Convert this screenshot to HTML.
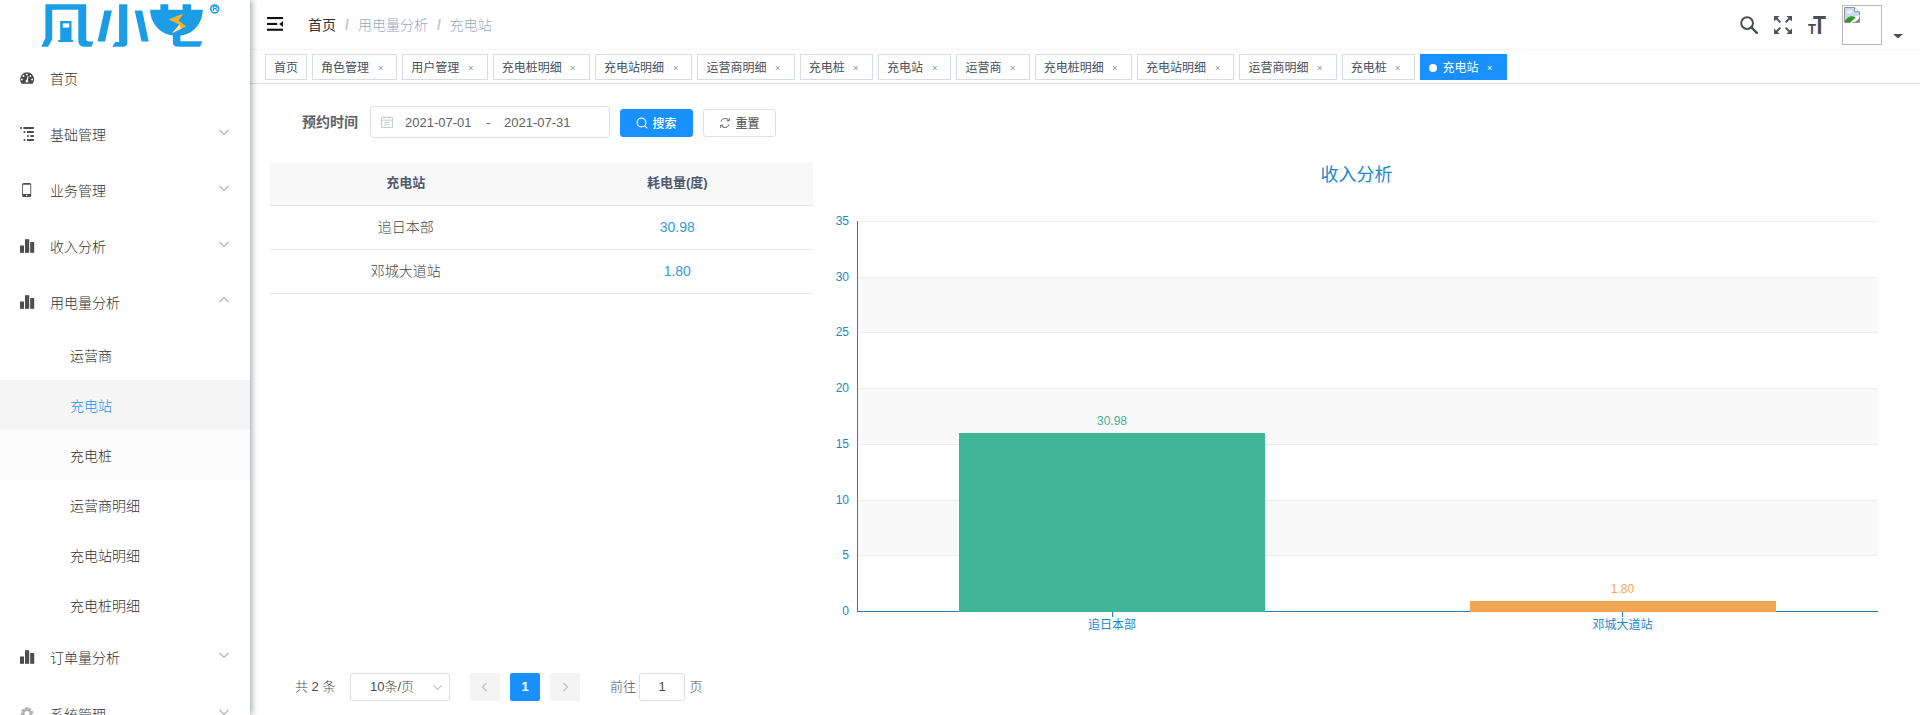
<!DOCTYPE html>
<html lang="zh-CN">
<head>
<meta charset="utf-8">
<title>充电站</title>
<style>
*{box-sizing:border-box;margin:0;padding:0}
html,body{width:1920px;height:715px;overflow:hidden;background:#fff}
body{font-family:"Liberation Sans","Noto Sans CJK SC",sans-serif;font-size:14px;font-weight:300;color:#606266;position:relative}
.abs{position:absolute}
/* sidebar */
#side{position:absolute;left:0;top:0;width:250px;height:715px;background:#fff;box-shadow:2px 0 6px rgba(0,21,41,.35);z-index:5;overflow:hidden}
#logo{position:absolute;left:0;top:0;width:250px;height:50px}
.mi{position:absolute;left:0;width:250px;height:56px;line-height:56px;color:#303133;font-size:14px}
.mi .tx{position:absolute;left:50px;top:1px;white-space:nowrap}
.mi svg.ic{position:absolute;left:20px;top:20px;width:15px;height:15px}
.mi svg.ar{position:absolute;left:218.300px;top:20px;width:12px;height:12px}
.si{position:absolute;left:0;width:250px;height:50px;line-height:50px;color:#303133;font-size:14px}
.si .tx{position:absolute;left:70px;top:1px;white-space:nowrap}
/* navbar */
#nav{position:absolute;left:250px;top:0;width:1670px;height:50px;background:#fff;box-shadow:0 1px 4px rgba(0,21,41,.08)}
#bc{position:absolute;left:58px;top:0;height:50px;line-height:50px;font-size:14px;white-space:nowrap}
#bc span{display:inline-block}
#bc .a{color:#303133;font-weight:400}
#bc .s{color:#c0c4cc;margin:0 9px;font-weight:700}
#bc .n{color:#97a8be}
/* tabs */
#tabs{position:absolute;left:250px;top:50px;width:1670px;height:34px;background:#fff;border-bottom:1px solid #d8dce5;box-shadow:0 1px 3px 0 rgba(0,0,0,.12),0 0 3px 0 rgba(0,0,0,.04)}
#tabs .wrap{position:absolute;left:0;top:0;white-space:nowrap;font-size:0}
.tab{font-weight:400;display:inline-block;position:relative;height:26px;line-height:26px;border:1px solid #d8dce5;color:#495060;background:#fff;padding:0 8px;font-size:12px;margin-left:5px;margin-top:4px;white-space:pre;vertical-align:top}
.tab:first-child{margin-left:15px}
.tab i{display:inline-block;width:16px;height:16px;line-height:16px;vertical-align:2px;text-align:center;font-style:normal;color:#8c939f}
.tab i b{display:inline-block;font-weight:400;font-size:13px;transform:scale(.72);vertical-align:-2px}
.tab.on{background:#1890ff;border-color:#1890ff;color:#fff}
.tab.on i{color:#fff}
.tab.on:before{content:"";display:inline-block;width:8px;height:8px;border-radius:50%;background:#fff;position:relative;margin-right:2px}
/* nav right */
#ham{position:absolute;left:17px;top:17px;width:16px;height:14px}
.nr{position:absolute;top:0}
#avatar{position:absolute;left:1592px;top:5px;width:40px;height:40px;border:1px solid #b9b9b9;background:#fff}
/* main */
#main{position:absolute;left:250px;top:84px;width:1670px;height:631px;background:#fff}
#main>*{position:absolute}
.lbl{left:52px;top:22px;height:32px;line-height:32px;font-weight:700;font-size:14px;color:#606266;white-space:nowrap}
.date{left:120px;top:22px;width:240px;height:32px;border:1px solid #dcdfe6;border-radius:4px;font-size:13px;color:#606266;line-height:30px;white-space:nowrap}
.date span{position:absolute;top:.7px}
.btn{top:25px;width:73px;height:28px;border-radius:3px;font-size:12px;line-height:26px;border:1px solid #dcdfe6;color:#606266;white-space:nowrap}
.btn.pri{background:#1890ff;border-color:#1890ff;color:#fff}
.btn svg{position:absolute;left:15px;top:7px;width:12px;height:12px}
.btn span{position:absolute;left:31.500px;top:.5px;font-weight:500}
/* table */
#tb{left:20px;top:78px;width:543px;font-size:14px;color:#45474c}
#tb .r{position:relative;height:44px;line-height:43px;border-bottom:1px solid #e7e9ec}
#tb .r span{position:absolute;top:0;width:271.500px;text-align:center;white-space:nowrap}
#tb .r span+span{left:271.500px}
#tb .h{background:#f8f8f9;color:#515a6e;font-weight:700;font-size:13px;line-height:42px}
#tb .v{color:#3a9ad9;font-weight:400}
/* pager */
#pg{left:0;top:589px;height:28px;line-height:28px;font-size:13px;color:#4b4d52;white-space:nowrap}
#pg>*{position:absolute;top:0;height:28px}
.pb{width:30px;border-radius:2px;background:#f4f4f5;text-align:center}
</style>
</head>
<body>
<div id="side">
  <div id="logo"><svg style="position:absolute;left:0;top:0;width:250px;height:50px" viewBox="0 0 250 50"><g fill="#1a9de6">
<path d="M45.400 4.200H86.200V38.500Q86.200 41.400 89 41.400H93.400L91.500 46.800H84.500Q78.300 46.800 78.300 40.500V9.800H52.200V39.300L48.100 46.800H41.300L45.400 38z"/>
<path d="M60.200 21.100h11.300V40H73v1.900H58.300V40h1.900z"/>
<path d="M104.400 10.600h7.500L105.100 41.500H97.600z"/>
<path d="M119.100 4.200h8.200V42.500Q127.300 46.800 123 46.800H112.300L115.300 41.900H119.100z"/>
<path d="M134.700 10.600h7.500L148.700 41.500h-7.200z"/>
<path d="M160.400 4.200h7.900v5.600h14.300V4.200H191v5.600h11.700C202.700 24 192 35 180.400 35.500V41.200H202.300L200 46.800H178Q172.800 46.800 172.800 41.500V35.500C160 34 150.200 23 150.200 9.800h10.200z"/>
</g>
<rect x="62.800" y="23.400" width="6.400" height="4.200" fill="#fff"/>
<path d="M183.400 13.600L168.700 19.600 179.500 24.500 172 33.200 186.400 26.400 178.500 20.500z" fill="#fbb12a"/>
<path d="M179.500 24.500L172 33.200 181 28.800z" fill="#fde3a8"/>
<circle cx="214.700" cy="8.900" r="3.950" fill="none" stroke="#1a9de6" stroke-width="1.600"/><text x="214.850" y="11.400" font-size="7.200" font-weight="700" fill="#1a9de6" text-anchor="middle" font-family="'Liberation Sans',sans-serif">R</text>
</svg></div>
  <div class="mi" style="top:50px"><svg class="ic" viewBox="0 0 15 15"><path d="M1.700 13.700A7 7 0 1 1 12.500 13.700z" fill="#4a4a4a"/><g fill="#fff"><circle cx="1.900" cy="9.500" r=".9"/><circle cx="3.500" cy="6" r=".9"/><circle cx="6.800" cy="4.500" r=".9"/><circle cx="10.400" cy="6" r=".9"/><circle cx="12.100" cy="9.500" r=".9"/><circle cx="6.900" cy="11.300" r="1.300"/></g><path d="M6.900 11.300L7.900 6.800" stroke="#fff" stroke-width="1.200" stroke-linecap="round"/></svg><span class="tx">首页</span></div>
  <div class="mi" style="top:106px"><svg class="ic" viewBox="0 0 15 15"><g fill="#3a3a3a"><rect x="0.100" y="1.100" width="1.700" height="1.800"/><rect x="3.400" y="1.100" width="10.500" height="1.800"/><rect x="3.700" y="5.100" width="1.500" height="1.800"/><rect x="7" y="5.100" width="6.900" height="1.800"/><rect x="7.200" y="9.100" width="1.500" height="1.800"/><rect x="10.400" y="9.100" width="3.500" height="1.800"/><rect x="3.700" y="13.100" width="1.500" height="1.800"/><rect x="7" y="13.100" width="6.900" height="1.800"/></g></svg><span class="tx">基础管理</span><svg class="ar" viewBox="0 0 12 12"><path d="M1.5 4l4.5 4.3L10.5 4" fill="none" stroke="#a9acb2" stroke-width="1.100"/></svg></div>
  <div class="mi" style="top:162px"><svg class="ic" viewBox="0 0 15 15" style="overflow:visible"><rect x="2.200" y=".9" width="9" height="14.100" rx="1.500" fill="#4a4a4a"/><rect x="3.050" y="2.700" width="7.300" height="9.300" fill="#fff"/><circle cx="6.700" cy="13.500" r=".75" fill="#fff"/></svg><span class="tx">业务管理</span><svg class="ar" viewBox="0 0 12 12"><path d="M1.5 4l4.5 4.3L10.5 4" fill="none" stroke="#a9acb2" stroke-width="1.100"/></svg></div>
  <div class="mi" style="top:218px"><svg class="ic" viewBox="0 0 15 15"><g fill="#4d4d4d"><rect x="0" y="7.5" width="4" height="7.3"/><rect x="5" y="1.2" width="4.2" height="13.6"/><rect x="10.2" y="4" width="4" height="10.8"/></g></svg><span class="tx">收入分析</span><svg class="ar" viewBox="0 0 12 12"><path d="M1.5 4l4.5 4.3L10.5 4" fill="none" stroke="#a9acb2" stroke-width="1.100"/></svg></div>
  <div class="mi" style="top:274px"><svg class="ic" viewBox="0 0 15 15"><g fill="#4d4d4d"><rect x="0" y="7.5" width="4" height="7.3"/><rect x="5" y="1.2" width="4.2" height="13.6"/><rect x="10.2" y="4" width="4" height="10.8"/></g></svg><span class="tx">用电量分析</span><svg class="ar" viewBox="0 0 12 12"><path d="M1.5 8l4.5-4.3L10.5 8" fill="none" stroke="#a9acb2" stroke-width="1.100"/></svg></div>
  <div class="si" style="top:330px"><span class="tx">运营商</span></div>
  <div class="si" style="top:380px;background:#f5f5f5;color:#1890ff"><span class="tx">充电站</span></div>
  <div class="si" style="top:430px;background:#fcfcfc"><span class="tx">充电桩</span></div>
  <div class="si" style="top:480px"><span class="tx">运营商明细</span></div>
  <div class="si" style="top:530px"><span class="tx">充电站明细</span></div>
  <div class="si" style="top:580px"><span class="tx">充电桩明细</span></div>
  <div class="mi" style="top:629px"><svg class="ic" viewBox="0 0 15 15"><g fill="#4d4d4d"><rect x="0" y="7.5" width="4" height="7.3"/><rect x="5" y="1.2" width="4.2" height="13.6"/><rect x="10.2" y="4" width="4" height="10.8"/></g></svg><span class="tx">订单量分析</span><svg class="ar" viewBox="0 0 12 12"><path d="M1.5 4l4.5 4.3L10.5 4" fill="none" stroke="#a9acb2" stroke-width="1.100"/></svg></div>
  <div class="mi" style="top:685.500px"><svg class="ic" viewBox="0 0 15 15"><circle cx="7" cy="7.500" r="5" fill="none" stroke="#b4b4b4" stroke-width="2.600" stroke-dasharray="2.600 1.330" transform="rotate(-75 7 7.500)"/><circle cx="7" cy="7.500" r="3.800" fill="none" stroke="#b4b4b4" stroke-width="2.600"/></svg><span class="tx">系统管理</span><svg class="ar" viewBox="0 0 12 12"><path d="M1.5 4l4.5 4.3L10.5 4" fill="none" stroke="#a9acb2" stroke-width="1.100"/></svg></div>
</div>
<div id="nav">
  <svg id="ham" viewBox="0 0 16 14"><g fill="#111"><rect x="0" y="0" width="16" height="2.100"/><rect x="0" y="5.900" width="10.200" height="2.100"/><rect x="0" y="11.700" width="16" height="2.100"/><path d="M16 3.900v6L12.200 6.900z"/></g></svg>
  <svg class="nr" style="left:1490px;top:16px;width:18px;height:18px" viewBox="0 0 18 18"><circle cx="7.100" cy="7.100" r="5.900" fill="none" stroke="#4a4d52" stroke-width="2"/><path d="M11.2 11.2l5.6 5.6" stroke="#4a4d52" stroke-width="2.4" stroke-linecap="round"/></svg>
  <svg class="nr" style="left:1524px;top:16px;width:18px;height:18px" viewBox="0 0 18 18"><g fill="#50545b"><path d="M0 0h5.600L0 5.600z"/><path d="M18 0v5.600L12.400 0z"/><path d="M0 18v-5.600l5.600 5.600z"/><path d="M18 18h-5.600l5.600-5.600z"/></g><path d="M1.800 1.800l4.600 4.600M16.200 1.800l-4.600 4.600M1.800 16.200l4.600-4.600M16.200 16.200l-4.600-4.600" stroke="#50545b" stroke-width="2"/></svg>
  <div class="nr" style="left:1558px;top:0;width:20px;height:50px;color:#4a4d52;font-weight:700;white-space:nowrap"><span style="position:absolute;left:-.3px;top:21.700px;font-size:14.800px;line-height:14.800px;transform:scale(.88,1);transform-origin:0 100%">T</span><span style="position:absolute;left:4.800px;top:11.800px;font-size:26.300px;line-height:26.300px;transform:scale(.805,1);transform-origin:0 0">T</span></div>
  <div id="avatar"><svg style="position:absolute;left:1px;top:1px;width:16px;height:16px" viewBox="0 0 16 16"><path d="M.5.5h10l5 4.500v10.500H.5z" fill="#fff" stroke="#8e9196" stroke-width="1"/><path d="M1 1h9v3.500h5V9L9 9.500 1 13z" fill="#cbd8f4"/><path d="M10.500.5v4.200h5" fill="#fff" stroke="#8e9196" stroke-width="1"/><ellipse cx="5.500" cy="4.800" rx="3" ry="1.600" fill="#fff" opacity=".75"/><path d="M1 15V13.500C3 10.500 6 9 8.500 9.300 10.500 9.500 11.500 10.300 12 11L7.500 15z" fill="#2f9a25"/><path d="M11 15l4.500-4v4z" fill="#8a8d90"/><path d="M6.900 15.800L15.400 8.500" stroke="#fff" stroke-width="1.600"/></svg></div>
  <svg class="nr" style="left:1642.500px;top:33.700px;width:10px;height:4.500px" viewBox="0 0 10 4.500"><path d="M0 0h10L5 4.500z" fill="#505050"/></svg>
  <div id="bc"><span class="a">首页</span><span class="s">/</span><span class="n">用电量分析</span><span class="s">/</span><span class="n">充电站</span></div>
</div>
<div id="tabs"><div class="wrap"><span class="tab">首页</span><span class="tab">角色管理 <i><b>×</b></i></span><span class="tab">用户管理 <i><b>×</b></i></span><span class="tab">充电桩明细 <i><b>×</b></i></span><span class="tab">充电站明细 <i><b>×</b></i></span><span class="tab">运营商明细 <i><b>×</b></i></span><span class="tab">充电桩 <i><b>×</b></i></span><span class="tab">充电站 <i><b>×</b></i></span><span class="tab">运营商 <i><b>×</b></i></span><span class="tab">充电桩明细 <i><b>×</b></i></span><span class="tab">充电站明细 <i><b>×</b></i></span><span class="tab">运营商明细 <i><b>×</b></i></span><span class="tab">充电桩 <i><b>×</b></i></span><span class="tab on"> 充电站 <i><b>×</b></i></span></div></div>
<div id="main">
  <div class="lbl">预约时间</div>
  <div class="date"><svg style="position:absolute;left:10px;top:9px;width:12px;height:12px" viewBox="0 0 13 13"><g fill="none" stroke="#c0c4cc" stroke-width="1"><rect x=".5" y="1.500" width="12" height="11" rx=".5"/><path d="M.5 4.500h12M3.500 7h6M3.500 9.500h6M3.500 .5v2M9.500 .5v2"/></g></svg><span style="left:34px">2021-07-01</span><span style="left:115px">-</span><span style="left:133px">2021-07-31</span></div>
  <div class="btn pri" style="left:370px"><svg viewBox="0 0 12 12"><circle cx="5.500" cy="5.500" r="4.400" fill="none" stroke="#fff" stroke-width="1.100"/><path d="M8.800 8.800l2.200 2.200" stroke="#fff" stroke-width="1.100" stroke-linecap="round"/></svg><span>搜索</span></div>
  <div class="btn" style="left:453px"><svg viewBox="0 0 12 12"><g fill="none" stroke="#606266" stroke-width="1"><path d="M2 4.500A4.300 4.300 0 0 1 9.800 3.500"/><path d="M10 7.500A4.300 4.300 0 0 1 2.200 8.500"/><path d="M10.300 1.200v2.600H7.700M1.700 10.800V8.200h2.600"/></g></svg><span>重置</span></div>
  <div id="tb">
    <div class="r h"><span>充电站</span><span>耗电量(度)</span></div>
    <div class="r"><span>追日本部</span><span class="v">30.98</span></div>
    <div class="r"><span>邓城大道站</span><span class="v">1.80</span></div>
  </div>
  <svg id="chart" style="left:570px;top:66px;width:1100px;height:500px" viewBox="820 150 1100 500" font-weight="400" font-family="'Liberation Sans','Noto Sans CJK SC',sans-serif"><rect x="857" y="499.57" width="1021" height="55.71" fill="#f9f9f9"/><rect x="857" y="388.14" width="1021" height="55.71" fill="#f9f9f9"/><rect x="857" y="276.71" width="1021" height="55.71" fill="#f9f9f9"/><path d="M857 555.5H1878" stroke="#eee" stroke-width="1"/><path d="M857 500.5H1878" stroke="#eee" stroke-width="1"/><path d="M857 444.5H1878" stroke="#eee" stroke-width="1"/><path d="M857 388.5H1878" stroke="#eee" stroke-width="1"/><path d="M857 332.5H1878" stroke="#eee" stroke-width="1"/><path d="M857 277.5H1878" stroke="#eee" stroke-width="1"/><path d="M857 221.5H1878" stroke="#eee" stroke-width="1"/><rect x="959" y="433" width="306" height="179" fill="#40b598"/><rect x="1470" y="601" width="306" height="11" fill="#f2a654"/><path d="M857.5 221V612" stroke="#2a7db3" stroke-width="1"/><path d="M857 611.5H959M1265 611.5H1470M1776 611.5H1878" stroke="#2a7db3" stroke-width="1"/><path d="M1112.500 612v5M1622.500 612v5" stroke="#2a7db3" stroke-width="1"/><g font-size="12" fill="#1b88c7" text-anchor="end"><text x="849" y="615.0">0</text><text x="849" y="559.3">5</text><text x="849" y="503.6">10</text><text x="849" y="447.9">15</text><text x="849" y="392.1">20</text><text x="849" y="336.4">25</text><text x="849" y="280.7">30</text><text x="849" y="225.0">35</text></g><g font-size="12" fill="#1b88c7" text-anchor="middle"><text x="1112" y="628.500">追日本部</text><text x="1622.500" y="628.500">邓城大道站</text></g><text x="1112" y="424.500" font-size="12" fill="#40b598" text-anchor="middle">30.98</text><text x="1622.500" y="592.500" font-size="12" fill="#f2a654" text-anchor="middle">1.80</text><text x="1356.500" y="180.500" font-size="18" fill="#1b88c7" text-anchor="middle">收入分析</text></svg>
  <div id="pg">
    <span style="left:45px">共 2 条</span>
    <div style="left:100px;width:100px;border:1px solid #dcdfe6;border-radius:3px;line-height:26px"><span style="position:absolute;left:19px">10条/页</span><svg style="position:absolute;left:81px;top:8px;width:11px;height:11px" viewBox="0 0 11 11"><path d="M1.500 3.500l4 4 4-4" fill="none" stroke="#c0c4cc" stroke-width="1.100"/></svg></div>
    <div class="pb" style="left:220px"><svg style="position:absolute;left:10px;top:9px;width:10px;height:10px" viewBox="0 0 10 10"><path d="M6.500 1L2.500 5l4 4" fill="none" stroke="#c0c4cc" stroke-width="1.400"/></svg></div>
    <div class="pb" style="left:260px;background:#1890ff;color:#fff;font-weight:700">1</div>
    <div class="pb" style="left:300px"><svg style="position:absolute;left:10px;top:9px;width:10px;height:10px" viewBox="0 0 10 10"><path d="M3.500 1l4 4-4 4" fill="none" stroke="#c0c4cc" stroke-width="1.400"/></svg></div>
    <span style="left:360px">前往</span>
    <div style="left:389px;width:46px;border:1px solid #dcdfe6;border-radius:3px;line-height:26px;text-align:center;font-size:13px">1</div>
    <span style="left:439.500px">页</span>
  </div>
</div>
</body>
</html>
